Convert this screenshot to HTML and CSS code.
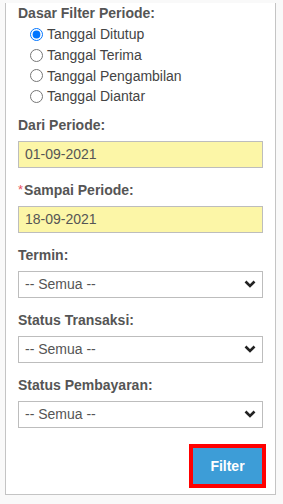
FILE: index.html
```html
<!DOCTYPE html>
<html lang="id">
<head>
    <meta charset="UTF-8">
    <meta name="viewport" content="width=device-width, initial-scale=1.0">
    <title>Filter Periode</title>
    <link rel="stylesheet" href="styles.css">
</head>
<body>
<div class="filter-panel">
    <div class="field field-radio">
        <label class="field-label">Dasar Filter Periode:</label>
        <div class="radio-list">
            <label class="radio-row"><input type="radio" name="dasar" checked> Tanggal Ditutup</label>
            <label class="radio-row"><input type="radio" name="dasar"> Tanggal Terima</label>
            <label class="radio-row"><input type="radio" name="dasar"> Tanggal Pengambilan</label>
            <label class="radio-row"><input type="radio" name="dasar"> Tanggal Diantar</label>
        </div>
    </div>

    <div class="field">
        <label class="field-label">Dari Periode:</label>
        <input class="date-input" type="text" value="01-09-2021">
    </div>

    <div class="field">
        <label class="field-label"><span class="required">*</span>Sampai Periode:</label>
        <input class="date-input" type="text" value="18-09-2021">
    </div>

    <div class="field">
        <label class="field-label">Termin:</label>
        <select class="select-input">
            <option>-- Semua --</option>
        </select>
    </div>

    <div class="field">
        <label class="field-label">Status Transaksi:</label>
        <select class="select-input">
            <option>-- Semua --</option>
        </select>
    </div>

    <div class="field">
        <label class="field-label">Status Pembayaran:</label>
        <select class="select-input">
            <option>-- Semua --</option>
        </select>
    </div>

    <div class="actions">
        <button class="btn-filter" type="button">Filter</button>
    </div>
</div>
</body>
</html>
```

FILE: styles.css
```css
html, body {
    margin: 0;
    padding: 0;
    background-color: #f9f9f9;
    font-family: "Liberation Sans", Arial, sans-serif;
}

.filter-panel {
    width: 245px;
    margin: 0 7px 0 5px;
    padding: 0 12px 10px 12px;
    background-color: #fff;
    border: 1px solid #c4c4c4;
    border-top: none;
}

.field {
    margin-bottom: 12px;
}

.field-radio {
    margin-bottom: 8px;
}

.field-label {
    display: block;
    font-size: 14px;
    font-weight: bold;
    line-height: 20px;
    color: #555;
    margin-bottom: 6px;
}

.field-radio .field-label {
    margin: 3px 0 1px;
}

.required {
    color: #e8505e;
    font-weight: normal;
    font-size: 13px;
    vertical-align: top;
    margin-right: 1px;
}

.radio-list {
    padding-left: 12px;
}

.radio-row {
    display: flex;
    align-items: center;
    height: 20.7px;
    font-size: 14px;
    color: #444;
}

.radio-row input {
    width: 13px;
    height: 13px;
    margin: 0 4px 0 0;
}

.date-input,
.select-input {
    display: block;
    box-sizing: border-box;
    width: 100%;
    height: 27px;
    border: 1px solid #bdbdbd;
    border-radius: 0;
    font-family: "Liberation Sans", Arial, sans-serif;
    font-size: 14px;
    color: #555;
}

.date-input {
    padding: 0 6px;
    background-color: #fcf6a7;
}

.select-input {
    appearance: none;
    -webkit-appearance: none;
    padding: 0 24px 0 6px;
    background-color: #fff;
    background-image: url("data:image/svg+xml,%3Csvg xmlns='http://www.w3.org/2000/svg' width='12' height='8' viewBox='0 0 12 8'%3E%3Cpath d='M1.5 1.5 L6 6 L10.5 1.5' fill='none' stroke='%23222' stroke-width='2.6'/%3E%3C/svg%3E");
    background-repeat: no-repeat;
    background-position: right 6px center;
    background-size: 12px 8px;
}

.actions {
    display: flex;
    justify-content: flex-end;
    padding-top: 8px;
}

.btn-filter {
    width: 69px;
    height: 36px;
    margin-right: 1px;
    border: none;
    border-radius: 0;
    background-color: #3d9dd7;
    color: #fff;
    font-family: "Liberation Sans", Arial, sans-serif;
    font-size: 14px;
    font-weight: bold;
    outline: 4px solid #ff0000;
    outline-offset: 0;
}
```
